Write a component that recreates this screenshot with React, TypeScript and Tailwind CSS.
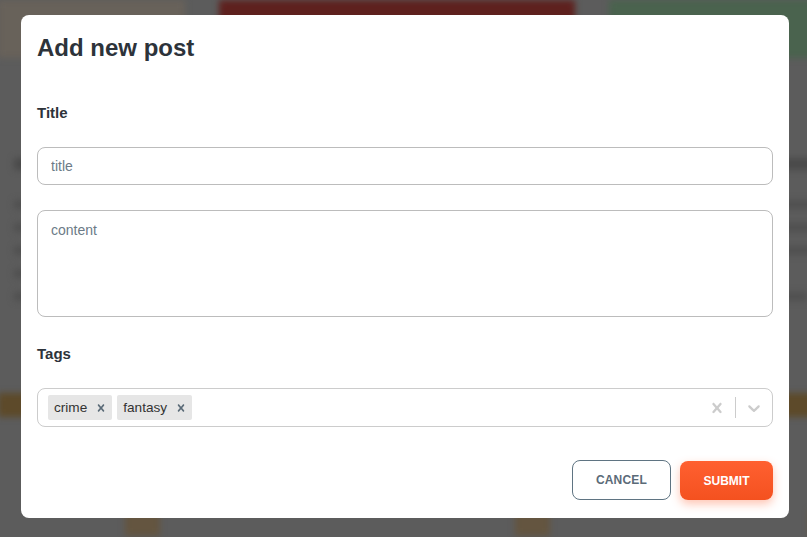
import React from 'react';

const font = { fontFamily: '"Liberation Sans", Arial, sans-serif' };

const CrossIcon = ({ size = 20, className = '' }: { size?: number; className?: string }) => (
    <svg viewBox="0 0 20 20" width={size} height={size} className={className} fill="currentColor" aria-hidden>
        <path d="M14.348 14.849c-0.469 0.469-1.229 0.469-1.697 0l-2.651-3.030-2.651 3.029c-0.469 0.469-1.229 0.469-1.697 0-0.469-0.469-0.469-1.229 0-1.697l2.758-3.15-2.759-3.152c-0.469-0.469-0.469-1.228 0-1.697s1.228-0.469 1.697 0l2.652 3.031 2.651-3.031c0.469-0.469 1.228-0.469 1.697 0s0.469 1.229 0 1.697l-2.758 3.152 2.758 3.15c0.469 0.469 0.469 1.229 0 1.698z" />
    </svg>
);

const ChevronIcon = () => (
    <svg viewBox="0 0 20 20" width={20} height={20} fill="currentColor" aria-hidden>
        <path d="M4.516 7.548c0.436-0.446 1.043-0.481 1.576 0l3.908 3.747 3.908-3.747c0.533-0.481 1.141-0.446 1.574 0 0.436 0.445 0.408 1.197 0 1.615-0.406 0.418-4.695 4.502-4.695 4.502-0.217 0.223-0.502 0.335-0.787 0.335s-0.57-0.112-0.789-0.335c0 0-4.287-4.084-4.695-4.502s-0.436-1.17 0-1.615z" />
    </svg>
);

// Blurred page sitting behind the dialog
const BackdropCard = ({ width, top }: { width: string; top: string }) => (
    <div className={`${width} shrink-0 flex flex-col`}>
        <div className={`h-[58px] ${top}`} />
        <div className="h-[100px]" />
        <div className="h-[12px] w-3/4 bg-[#4a4a4a] ml-4" />
        <div className="h-[30px]" />
        <div className="flex flex-col gap-[14px] px-4">
            <div className="h-[9px] w-full bg-[#505050]" />
            <div className="h-[9px] w-5/6 bg-[#505050]" />
            <div className="h-[9px] w-full bg-[#505050]" />
            <div className="h-[9px] w-2/3 bg-[#505050]" />
            <div className="h-[9px] w-4/5 bg-[#505050]" />
        </div>
        <div className="h-[92px]" />
        <div className="h-[24px] bg-[#5d4a2a]" />
        <div className="h-[93px]" />
        <div className="flex justify-end pr-[25px]">
            <div className="h-[26px] w-[35px] bg-[#645540]" />
        </div>
    </div>
);

function TagChip({ label }: { label: string }) {
    return (
        <div className="flex items-center bg-[#e6e6e6] rounded-[2px] m-[2px] h-[25px]">
            <span className="text-[13.6px] text-[#333] pl-[6px] pr-[3px] leading-none">{label}</span>
            <span className="px-[4px] flex items-center text-[#5b6b78]">
                <CrossIcon size={14} />
            </span>
        </div>
    );
}

export default function App() {
    return (
        <div className="relative w-[807px] h-[537px] overflow-hidden bg-[#5c5c5c]" style={font}>
            {/* page behind */}
            <div className="flex gap-[34px] blur-[3px] -ml-[2px]">
                <BackdropCard width="w-[187px]" top="bg-[#68625a]" />
                <BackdropCard width="w-[356px]" top="bg-[#5e211e]" />
                <BackdropCard width="w-[260px]" top="bg-[#4a634e]" />
            </div>

            {/* dialog */}
            <div className="absolute inset-0">
                <div className="ml-[21px] mt-[15px] w-[768px] h-[503px] bg-white rounded-[8px] px-4 pt-[18px] flex flex-col">
                    <h2 className="text-[24px] leading-[29px] font-bold text-[#2d333a]">Add new post</h2>

                    <label className="mt-[41px] text-[15px] leading-[20px] font-bold text-[#2d333a]">Title</label>
                    <input
                        placeholder="title"
                        className="mt-[24px] h-[38px] w-full border border-[#bcbcbc] rounded-[8px] px-[13px] text-[14px] text-[#333] placeholder:text-[#6c7b87] outline-none"
                    />

                    <textarea
                        placeholder="content"
                        className="mt-[25px] h-[107px] w-full border border-[#bcbcbc] rounded-[8px] px-[13px] pt-[9px] text-[14px] text-[#333] placeholder:text-[#6c7b87] outline-none resize-none"
                    />

                    <label className="mt-[27px] text-[15px] leading-[20px] font-bold text-[#2d333a]">Tags</label>
                    <div className="mt-[24px] h-[39px] w-full border border-[#cccccc] rounded-[8px] flex items-center">
                        <div className="flex-1 flex items-center pl-[8px]">
                            <TagChip label="crime" />
                            <div className="w-[1px]" />
                            <TagChip label="fantasy" />
                        </div>
                        <div className="flex items-center h-full">
                            <div className="p-[8px] text-[#cccccc]">
                                <CrossIcon />
                            </div>
                            <div className="w-px h-[21px] bg-[#cccccc]" />
                            <div className="p-[8px] text-[#cccccc]">
                                <ChevronIcon />
                            </div>
                        </div>
                    </div>

                    <div className="mt-[33px] flex justify-end gap-[9px]">
                        <button className="h-[40px] w-[99px] border border-[#5f7482] rounded-[8px] text-[12px] font-bold text-[#5b6b78] tracking-[0.2px]">
                            CANCEL
                        </button>
                        <button className="h-[39px] mt-px w-[93px] rounded-[8px] bg-gradient-to-b from-[#ff6030] to-[#f4511f] text-white text-[12px] font-bold shadow-[0_4px_10px_rgba(255,87,34,0.35)]">
                            SUBMIT
                        </button>
                    </div>
                </div>
            </div>
        </div>
    );
}
